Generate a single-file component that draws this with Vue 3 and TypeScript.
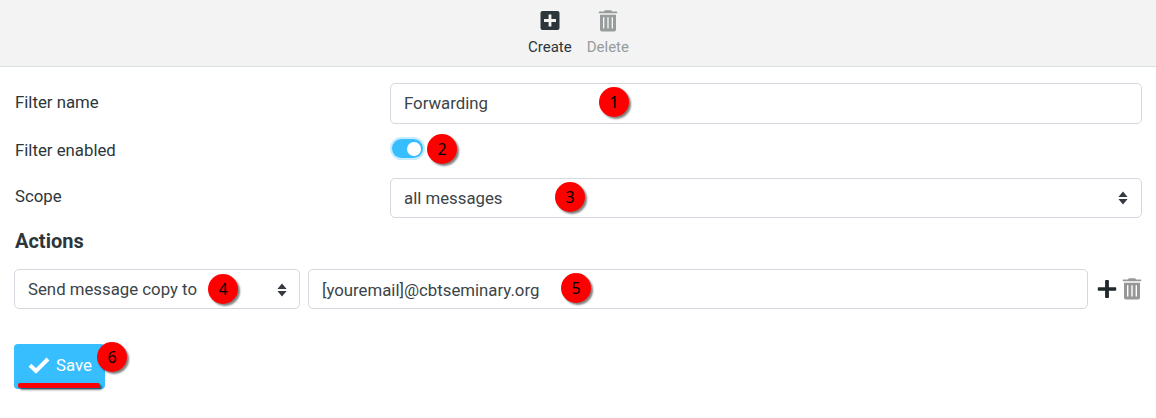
<template>
  <div class="page">
    <header class="toolbar">
      <button class="tool" type="button">
        <svg class="tool-icon" viewBox="0 0 20 22">
          <path fill-rule="evenodd" d="M2.5 1h15a2 2 0 0 1 2 2v15a2 2 0 0 1-2 2h-15a2 2 0 0 1-2-2v-15a2 2 0 0 1 2-2ZM8.6 4.5v4.6H4v2.8h4.6v4.6h2.8v-4.6H16V9.1h-4.6V4.5Z" />
        </svg>
        <span class="create-label">Create</span>
      </button>
      <button class="tool" type="button" disabled>
        <svg class="tool-icon" viewBox="0 0 20 22">
          <path fill-rule="evenodd" :d="trashPath" />
        </svg>
        <span class="delete-label">Delete</span>
      </button>
    </header>

    <form class="form" @submit.prevent>
      <div class="row">
        <label class="label" for="name">Filter name</label>
        <div class="field name-field">
          <input id="name" v-model="filterName" class="control" type="text" />
          <span class="badge badge-1">1</span>
        </div>
      </div>

      <div class="row toggle-row">
        <span class="label">Filter enabled</span>
        <div class="field">
          <button class="switch" :class="{ on: enabled }" type="button" @click="enabled = !enabled">
            <span class="knob"></span>
          </button>
          <span class="badge badge-2">2</span>
        </div>
      </div>

      <div class="row">
        <span class="label scope-label">Scope</span>
        <div class="field">
          <div class="control select">
            <span class="value">{{ scope }}</span>
            <svg class="caret" viewBox="0 0 10 14"><path d="M5 .6 9.6 6H.4ZM.4 8h9.2L5 13.4Z" /></svg>
          </div>
          <span class="badge badge-3">3</span>
        </div>
      </div>

      <h2 class="heading">Actions</h2>

      <div class="actions">
        <div class="field action-type">
          <div class="control select">
            <span class="value">{{ action }}</span>
            <svg class="caret" viewBox="0 0 10 14"><path d="M5 .6 9.6 6H.4ZM.4 8h9.2L5 13.4Z" /></svg>
          </div>
          <span class="badge badge-4">4</span>
        </div>
        <div class="field action-target">
          <input v-model="target" class="control target" type="text" />
          <span class="badge badge-5">5</span>
        </div>
        <svg class="add" viewBox="0 0 20 20">
          <path d="M8.9.9h2.2q.8 0 .8.8v6.5h6.5q.8 0 .8.8v2q0 .8-.8.8h-6.5v6.5q0 .8-.8.8H8.9q-.8 0-.8-.8v-6.5H1.6q-.8 0-.8-.8V9q0-.8.8-.8h6.5V1.7q0-.8.8-.8Z" />
        </svg>
        <svg class="remove" viewBox="0 0 20 22">
          <path fill-rule="evenodd" :d="trashPath" />
        </svg>
      </div>

      <button class="save" type="submit">
        <svg class="check" viewBox="0 0 22 18">
          <path d="M2 9.2 8 15 20 3" />
        </svg>
        <span class="save-label">Save</span>
        <span class="underline"></span>
        <span class="badge badge-6">6</span>
      </button>
    </form>
  </div>
</template>

<script setup lang="ts">
import { ref } from "vue";

const filterName = ref<string>("Forwarding");
const enabled = ref<boolean>(true);
const scope = ref<string>("all messages");
const action = ref<string>("Send message copy to");
const target = ref<string>("[youremail]@cbtseminary.org");

const trashPath =
  "M1.4 1.4H6L6.8.3h6.4l.8 1.1h4.6q.6 0 .6.6v1.2H.8V2q0-.6.6-.6Z" +
  "M2 4.8h16v14.6a2 2 0 0 1-2 2H4a2 2 0 0 1-2-2Z" +
  "M5 7.3v11.2h1.4V7.3ZM9.3 7.3v11.2h1.4V7.3ZM13.6 7.3v11.2H15V7.3Z";
</script>

<style>
body {
  background: #fff;
}
</style>

<style scoped>
.page {
  box-sizing: border-box;
  height: 418px;
  overflow: hidden;
  color: #2c363a;
  font: 16.8px/24px Roboto, sans-serif;
}

button,
input {
  margin: 0;
  padding: 0;
  border: 0;
  background: none;
  color: inherit;
  font: inherit;
}

/* toolbar */
.toolbar {
  box-sizing: border-box;
  display: flex;
  justify-content: center;
  gap: 15px;
  height: 67px;
  padding: 10px 0 0 1px;
  border-bottom: 1px solid #d9e0e1;
  background: #f3f3f3;
}

.tool {
  display: flex;
  flex-direction: column;
  align-items: center;
  height: 49px;
  font-size: 15px;
}

.tool:disabled {
  color: #979b9c;
}

.tool-icon {
  width: 20px;
  height: 22px;
  fill: currentColor;
}

.tool span {
  margin-top: 3px;
}

/* form */
.form {
  padding: 16px 14px 0;
}

.row {
  display: grid;
  grid-template-columns: 376px 1fr;
}

.label {
  padding: 7px 0 0 1px;
}

.scope-label {
  padding-top: 6px;
}

.field {
  position: relative;
}

.control {
  box-sizing: border-box;
  display: block;
  width: 100%;
  height: 40px;
  padding: 0 13px;
  border: 1px solid #d3d9de;
  border-radius: 5px;
  background: #fff;
  color: #3b4448;
}

.name-field .control {
  height: 41px;
  padding-bottom: 1px;
}

.toggle-row {
  height: 54px;
}

.toggle-row .label {
  padding-top: 14px;
}

.select {
  display: flex;
  align-items: center;
  justify-content: space-between;
}

.value {
  padding-bottom: 1px;
}

.caret {
  width: 10px;
  height: 14px;
  fill: #343a40;
}

.switch {
  display: flex;
  align-items: center;
  box-sizing: border-box;
  width: 31px;
  height: 19px;
  margin: 15px 0 0 2px;
  padding: 0 2px;
  border-radius: 10px;
  background: #adb5bd;
  box-shadow: 0 0 0 2px #c7ecff;
}

.switch.on {
  justify-content: flex-end;
  background: #37beff;
}

.knob {
  width: 14px;
  height: 14px;
  border-radius: 50%;
  background: #fff;
}

.heading {
  margin: 11px 0 16px 1px;
  font-size: 20px;
  font-weight: 700;
  line-height: 24px;
}

/* actions */
.actions {
  display: flex;
  align-items: center;
}

.action-type {
  width: 286px;
  margin-right: 8px;
}

.action-type .select {
  padding: 1px 12px 0 13px;
}

.action-target {
  flex: 1;
}

.target {
  padding-top: 1px;
}

.add {
  width: 20px;
  height: 20px;
  margin-left: 9px;
  fill: #20282b;
}

.remove {
  width: 20px;
  height: 22px;
  margin: 0 0 0 5px;
  fill: #979797;
}

.save {
  position: relative;
  display: flex;
  align-items: center;
  width: 91px;
  height: 45px;
  margin-top: 35px;
  padding: 0 0 3px 14px;
  box-sizing: border-box;
  border-radius: 4px;
  background: #37beff;
  color: #fff;
}

.check {
  width: 22px;
  height: 18px;
  margin-right: 6px;
  fill: none;
  stroke: #fff;
  stroke-width: 4;
}

.save-label {
  padding-bottom: 1px;
}

.underline {
  position: absolute;
  left: 4px;
  bottom: 1px;
  width: 82px;
  height: 5px;
  border-radius: 2px;
  background: #f00;
  box-shadow: 2px 2px 2px rgba(0, 0, 0, 0.5);
}

/* numbered markers laid over the controls */
.badge {
  position: absolute;
  width: 30px;
  height: 30px;
  border-radius: 50%;
  background: #f00;
  box-shadow: 2px 2px 2px rgba(0, 0, 0, 0.5);
  color: #000;
  font: 16px/30px "Noto Sans", sans-serif;
  text-align: center;
}

.badge-1 {
  left: 209px;
  top: 4px;
}

.badge-2 {
  left: 37px;
  top: 10px;
}

.badge-3 {
  left: 165px;
  top: 4px;
}

.badge-4 {
  left: 194px;
  top: 5px;
}

.badge-5 {
  left: 253px;
  top: 4px;
}

.badge-6 {
  left: 83px;
  top: -2px;
}
</style>
